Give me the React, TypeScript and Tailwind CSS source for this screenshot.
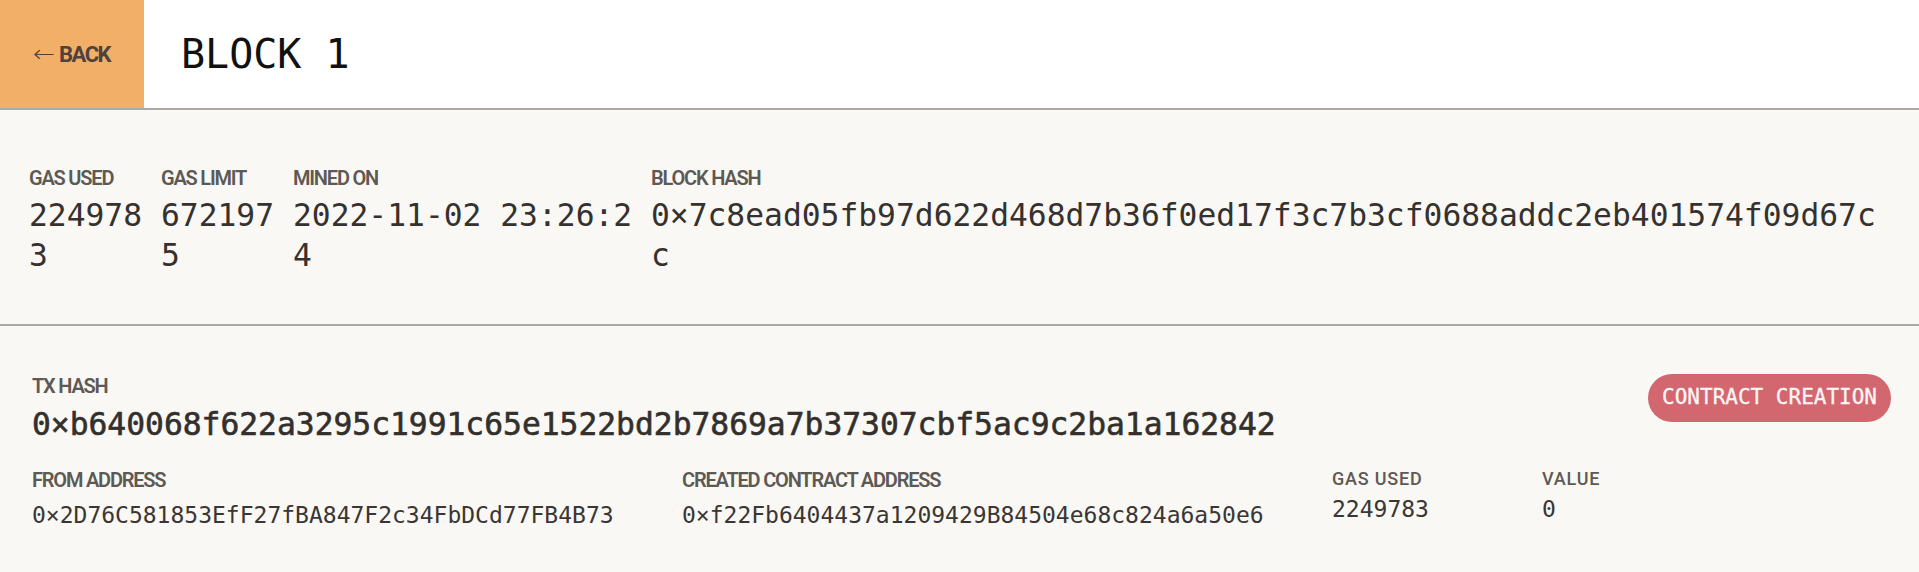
import React from 'react';

const MONO = "font-['DejaVu_Sans_Mono',monospace]";
const SANS = "font-['Roboto',sans-serif]";

const Label: React.FC<{ children: React.ReactNode; className?: string }> = ({ children, className = '' }) => (
    <div className={`${SANS} uppercase text-[#5d5955] ${className}`}>{children}</div>
);

const TopStat: React.FC<{ label: string; value: string; className?: string }> = ({ label, value, className = '' }) => (
    <div className={className}>
        <Label className="text-[20px] leading-[24px] font-semibold tracking-[-1.2px] whitespace-nowrap">{label}</Label>
        <div className={`${MONO} mt-[5px] text-[31.3px] leading-[40px] text-[#35312e] break-all`}>{value}</div>
    </div>
);

const App: React.FC = () => {
    return (
        <div className="min-h-screen bg-[#f9f8f4]">
            {/* Header */}
            <header className="flex h-[110px] bg-white border-b-2 border-[#aaa9a5]">
                <button className={`${SANS} w-[144px] shrink-0 bg-[#f2af67] text-[#4f423d] flex items-center justify-center`}>
                    <span className="font-['DejaVu_Sans',sans-serif] text-[24px] font-light mr-[5px] scale-x-110">←</span>
                    <span className="text-[22px] font-bold tracking-[-1.5px]">BACK</span>
                </button>
                <h1 className={`${MONO} flex items-center pl-[37px] text-[40px] text-[#111111]`}>BLOCK 1</h1>
            </header>

            {/* Block summary */}
            <section className="border-b-2 border-[#aaa9a5] pl-[29px] pr-[32px] pt-[56px] pb-[49px]">
                <div className="flex gap-[6px]">
                    <TopStat label="Gas Used" value="2249783" className="w-[126px] shrink-0" />
                    <TopStat label="Gas Limit" value="6721975" className="w-[126px] shrink-0" />
                    <TopStat label="Mined On" value="2022-11-02 23:26:24" className="w-[352px] shrink-0" />
                    <TopStat
                        label="Block Hash"
                        value="0×7c8ead05fb97d622d468d7b36f0ed17f3c7b3cf0688addc2eb401574f09d67cc"
                        className="flex-1 min-w-0"
                    />
                </div>
            </section>

            {/* Transaction */}
            <section className="pl-[32px] pr-[28px] pt-[48px] pb-[40px]">
                <div className="flex items-start justify-between">
                    <div>
                        <Label className="text-[20px] leading-[24px] font-semibold tracking-[-1.2px]">TX Hash</Label>
                        <div className={`${MONO} mt-[6px] text-[31.3px] leading-[40px] text-[#332f2c] [-webkit-text-stroke:0.6px_#332f2c]`}>
                            0×b640068f622a3295c1991c65e1522bd2b7869a7b37307cbf5ac9c2ba1a162842
                        </div>
                    </div>
                    <div className={`${MONO} h-[48px] px-[14px] rounded-full bg-[#d2676f] text-[#fdf5f4] text-[21px] flex items-center [-webkit-text-stroke:0.3px_#fdf5f4]`}>
                        CONTRACT CREATION
                    </div>
                </div>

                <div className="flex mt-[24px]">
                    <div className="w-[650px] shrink-0">
                        <Label className="text-[20px] leading-[24px] font-semibold tracking-[-1.2px]">From Address</Label>
                        <div className={`${MONO} mt-[7px] text-[23px] leading-[32px] text-[#3a3634]`}>
                            0×2D76C581853EfF27fBA847F2c34FbDCd77FB4B73
                        </div>
                    </div>
                    <div className="w-[650px] shrink-0">
                        <Label className="text-[20px] leading-[24px] font-semibold tracking-[-1.2px]">Created Contract Address</Label>
                        <div className={`${MONO} mt-[7px] text-[23px] leading-[32px] text-[#3a3634]`}>
                            0×f22Fb6404437a1209429B84504e68c824a6a50e6
                        </div>
                    </div>
                    <div className="w-[210px] shrink-0">
                        <Label className="text-[18px] leading-[22px] font-medium tracking-[0.8px]">Gas Used</Label>
                        <div className={`${MONO} mt-[3px] text-[23px] leading-[32px] text-[#3a3634]`}>2249783</div>
                    </div>
                    <div className="flex-1">
                        <Label className="text-[18px] leading-[22px] font-medium tracking-[0.8px]">Value</Label>
                        <div className={`${MONO} mt-[3px] text-[23px] leading-[32px] text-[#3a3634]`}>0</div>
                    </div>
                </div>
            </section>
        </div>
    );
};

export default App;
